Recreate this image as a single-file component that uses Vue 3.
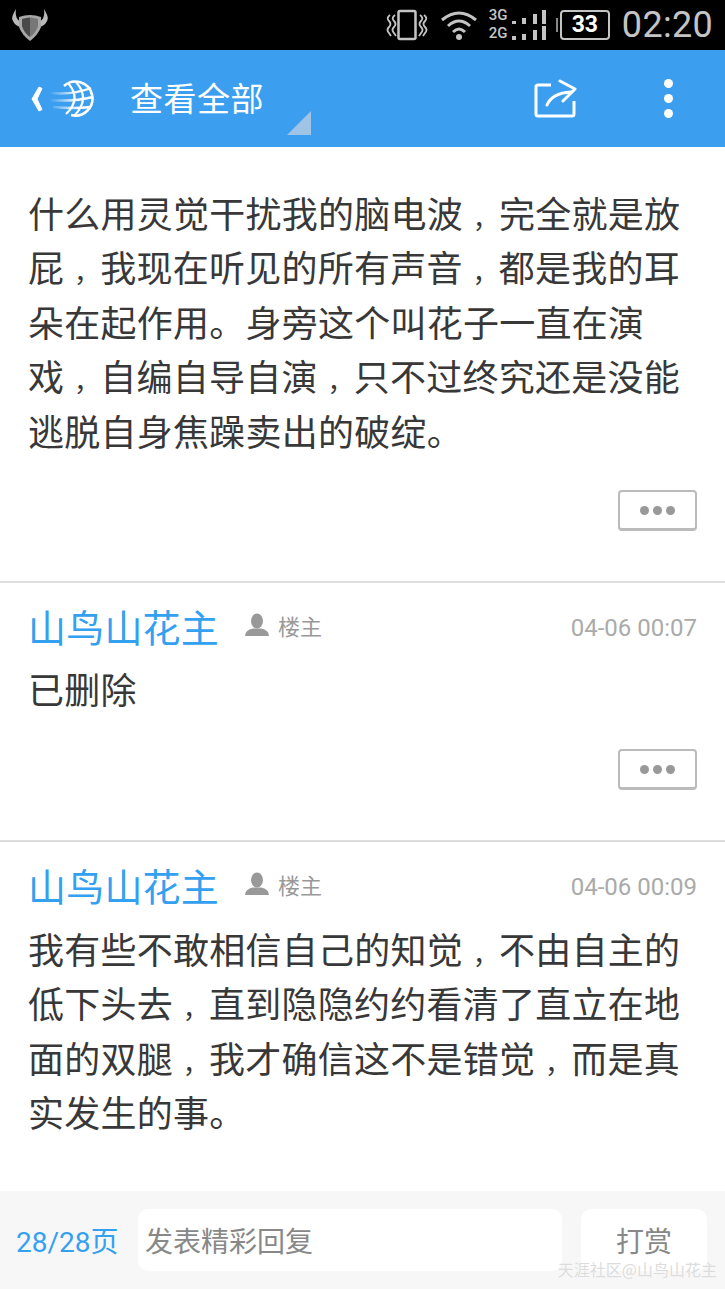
<template>
  <div class="page">
    <div class="status">
      <svg class="shield" width="40" height="36" viewBox="0 0 40 36">
        <path d="M6 2 C3 7 1 11 3 14 C4 17 7 19 10 20 L10 14 C7 13 5 9 6 2Z" fill="#b9b9b9"/>
        <path d="M34 2 C37 7 39 11 37 14 C36 17 33 19 30 20 L30 14 C33 13 35 9 34 2Z" fill="#b9b9b9"/>
        <path d="M9 10 Q20 6 31 10 L31 20 Q28 28 20 34 Q12 28 9 20Z" fill="#a8a8a8"/>
        <path d="M12 12 Q16 10.500 20 10.500 L20 30 Q14 26 12 19Z" fill="#4a4a4a"/>
        <path d="M20 10.500 Q24 10.500 28 12 L28 19 Q26 26 20 30Z" fill="#777"/>
      </svg>
      <div class="status-right">
        <svg width="46" height="32" viewBox="0 0 46 32" fill="none" stroke="#c4c4c4">
          <rect x="13.500" y="2" width="17" height="28" rx="1.500" stroke-width="2.500"/>
          <path d="M5 6 Q1 9 4 12 Q7 15 4 18 Q1 21 4 24 L6 27M10 6 Q6 9 9 12 Q12 15 9 18 Q6 21 9 24 L11 27M39 6 Q43 9 40 12 Q37 15 40 18 Q43 21 40 24 L38 27M35 6 Q39 9 36 12 Q33 15 36 18 Q39 21 36 24 L34 27" stroke-width="1.800"/>
        </svg>
        <svg class="wifi" width="38" height="32" viewBox="0 0 38 32" fill="none" stroke="#c4c4c4" stroke-width="3">
          <path d="M2 11 Q19 -3 36 11M8 17 Q19 7 30 17M13 23 Q19 17 25 23"/>
          <circle cx="19" cy="28" r="3" fill="#c4c4c4" stroke="none"/>
        </svg>
        <div class="net"><span>3G</span><span>2G</span></div>
        <svg width="36" height="32" viewBox="0 0 36 32" fill="#c4c4c4">
          <rect x="0" y="12" width="4" height="3"/><rect x="10" y="9" width="4" height="6"/><rect x="21" y="5" width="4" height="10"/><rect x="30" y="1" width="4" height="14"/>
          <rect x="0" y="27" width="4" height="4"/><rect x="10" y="25" width="4" height="6"/><rect x="21" y="21" width="4" height="10"/><rect x="30" y="17" width="4" height="14"/>
        </svg>
        <div class="battery">33</div>
        <div class="clock">02:20</div>
      </div>
    </div>

    <header class="bar">
      <svg class="back" width="14" height="26" viewBox="0 0 14 26"><path d="M9 1 L2 13 L9 25 L12 23.500 L7 13 L12 2.500Z" fill="#fff" stroke="#fff" stroke-linejoin="round"/></svg>
      <svg class="globe" width="46" height="38" viewBox="0 0 46 38" fill="none" stroke="#fff">
        <defs>
          <linearGradient id="fade" gradientUnits="userSpaceOnUse" x1="0" y1="0" x2="30" y2="0">
            <stop offset="0" stop-color="#fff" stop-opacity="0"/>
            <stop offset="1" stop-color="#fff"/>
          </linearGradient>
        </defs>
        <path d="M15 6 A17 17 0 1 1 22 35" stroke-width="2.600"/>
        <path d="M27 2 Q42 19 25 36M19 3 Q33 19 17 34" stroke-width="2.200"/>
        <path d="M2 13 Q24 15 42 8M0 20 Q24 22 44 17M4 27 Q24 29 42 27" stroke="url(#fade)" stroke-width="2.400"/>
      </svg>
      <span class="title">查看全部</span>
      <span class="corner"></span>
      <svg class="share" width="44" height="40" viewBox="0 0 44 40" fill="none" stroke="#fff" stroke-width="3" stroke-linejoin="round">
        <path d="M17 6 H4 Q2 6 2 8 V35 Q2 37 4 37 H38 Q40 37 40 35 V22"/>
        <path d="M13 26 Q18 14 37 13" stroke-linecap="round"/>
        <path d="M26 2 L41 10 L29 22" stroke-linecap="round"/>
      </svg>
      <div class="dots"><i></i><i></i><i></i></div>
    </header>

    <main class="list">
      <section class="post first">
        <p v-for="line in firstLines" :key="line">
          <template v-for="(part, i) in line.split('，')" :key="i"><span v-if="i" class="comma">，</span>{{ part }}</template>
        </p>
        <div class="more"><i></i><i></i><i></i></div>
      </section>
      <section class="post second">
        <div class="meta">
          <span class="name">山鸟山花主</span>
          <svg width="26" height="24" viewBox="0 0 26 24" fill="#999"><ellipse cx="13" cy="8" rx="6" ry="7.500"/><path d="M1 23 Q1 17 9 15.500 H17 Q25 17 25 23Z"/></svg>
          <span class="role">楼主</span>
          <span class="time">04-06 00:07</span>
        </div>
        <p>已删除</p>
        <div class="more"><i></i><i></i><i></i></div>
      </section>
      <section class="post third">
        <div class="meta">
          <span class="name">山鸟山花主</span>
          <svg width="26" height="24" viewBox="0 0 26 24" fill="#999"><ellipse cx="13" cy="8" rx="6" ry="7.500"/><path d="M1 23 Q1 17 9 15.500 H17 Q25 17 25 23Z"/></svg>
          <span class="role">楼主</span>
          <span class="time">04-06 00:09</span>
        </div>
        <p v-for="line in thirdLines" :key="line">
          <template v-for="(part, i) in line.split('，')" :key="i"><span v-if="i" class="comma">，</span>{{ part }}</template>
        </p>
      </section>
    </main>

    <footer class="foot">
      <span class="pages">28/28页</span>
      <div class="input">发表精彩回复</div>
      <div class="reward">打赏</div>
    </footer>
    <div class="mark">天涯社区@山鸟山花主</div>
  </div>
</template>

<script setup>
const firstLines = [
  '什么用灵觉干扰我的脑电波，完全就是放',
  '屁，我现在听见的所有声音，都是我的耳',
  '朵在起作用。身旁这个叫花子一直在演',
  '戏，自编自导自演，只不过终究还是没能',
  '逃脱自身焦躁卖出的破绽。'
]
const thirdLines = [
  '我有些不敢相信自己的知觉，不由自主的',
  '低下头去，直到隐隐约约看清了直立在地',
  '面的双腿，我才确信这不是错觉，而是真',
  '实发生的事。'
]
</script>

<style>
html, body { margin: 0; background: #fff; }
</style>

<style scoped>
.page { position: relative; width: 725px; height: 1289px; overflow: hidden; display: flex; flex-direction: column; background: #fff; font-family: "Noto Sans CJK SC", "Liberation Sans", sans-serif; }
.status { height: 50px; flex: none; background: #000; display: flex; align-items: flex-start; justify-content: space-between; box-sizing: border-box; padding: 7px 12px 0 10px; }
.status-right { display: flex; align-items: center; height: 36px; }
.wifi { margin-left: 9px; }
.net { margin-left: 11px; display: flex; flex-direction: column; color: #c4c4c4; font: 500 15px/17.600px "Roboto", sans-serif; width: 23px; }
.battery { position: relative; margin-left: 12px; width: 46px; height: 26px; border: 2px solid #c4c4c4; border-radius: 4px; color: #fff; font: 700 23px/26px "Roboto", sans-serif; text-align: center; }
.battery::before { content: ""; position: absolute; left: -6px; top: 6px; width: 2px; height: 14px; background: #888; }
.clock { margin-left: 12px; color: #c4c4c4; font: 400 36px/36px "Roboto", sans-serif; letter-spacing: .3px; }
.bar { height: 97px; flex: none; background: #3c9eee; display: flex; align-items: center; position: relative; box-sizing: border-box; padding-left: 30px; }
.globe { margin-left: 5px; }
.title { margin: 0 0 4px 35px; color: #fff; font-size: 33px; letter-spacing: .5px; }
.corner { position: absolute; left: 287px; top: 61px; width: 24px; height: 24px; background: #a0c4e6; clip-path: polygon(100% 0, 100% 100%, 0 100%); }
.share { margin-left: auto; margin-right: 86px; }
.dots { display: flex; flex-direction: column; gap: 6px; margin-right: 52px; }
.dots i { width: 9px; height: 9px; border-radius: 50%; background: #fff; }
.list { flex: 1; min-height: 0; }
.post { padding: 0 28px; border-bottom: 2px solid #ddd; }
.post p { margin: 0; color: #383838; font-size: 36px; line-height: 54.4px; letter-spacing: .25px; white-space: nowrap; }
.comma { display: inline-block; width: 36px; font-size: 26px; line-height: 1; text-align: right; }
.first { height: 436px; box-sizing: border-box; padding-top: 38px; }
.second { height: 259px; box-sizing: border-box; padding-top: 16px; }
.third { border-bottom: none; padding-top: 16px; }
.meta { display: flex; align-items: center; height: 54px; margin-bottom: 8px; }
.third .meta { margin-bottom: 9px; }
.name { color: #33a0f0; font-size: 38px; line-height: 54px; letter-spacing: .2px; }
.meta svg { margin: 0 0 2px 25px; }
.role { margin: 0 0 2px 8px; color: #999; font-size: 22px; }
.time { margin: 4px 0 0 auto; color: #aaa; font: 400 24px "Roboto", sans-serif; }
.more { width: 79px; height: 41px; box-sizing: border-box; margin: 0 0 0 auto; border: 2px solid #bbb; border-bottom-width: 3px; border-radius: 4px; display: flex; justify-content: center; align-items: center; gap: 4px; }
.more i { width: 9px; height: 9px; border-radius: 50%; background: #999; }
.first .more { margin-top: 33px; }
.second .more { margin-top: 34px; }
.foot { height: 98px; flex: none; background: #f7f7f7; display: flex; align-items: center; box-sizing: border-box; padding: 0 18px 0 16px; }
.pages { width: 122px; color: #33a0f0; font-size: 28px; white-space: nowrap; font-family: "Roboto", "Noto Sans CJK SC", sans-serif; }
.input { width: 424px; height: 62px; box-sizing: border-box; padding-left: 7px; background: #fff; border-radius: 10px; color: #888; font-size: 28px; line-height: 62px; }
.reward { margin-left: auto; width: 126px; height: 62px; background: #fff; border-radius: 10px; color: #888; font-size: 28px; line-height: 62px; text-align: center; }
.mark { position: absolute; right: 8px; bottom: 8px; color: #dcdcdc; font-size: 16px; text-shadow: 0 0 1px #fff; }
</style>
